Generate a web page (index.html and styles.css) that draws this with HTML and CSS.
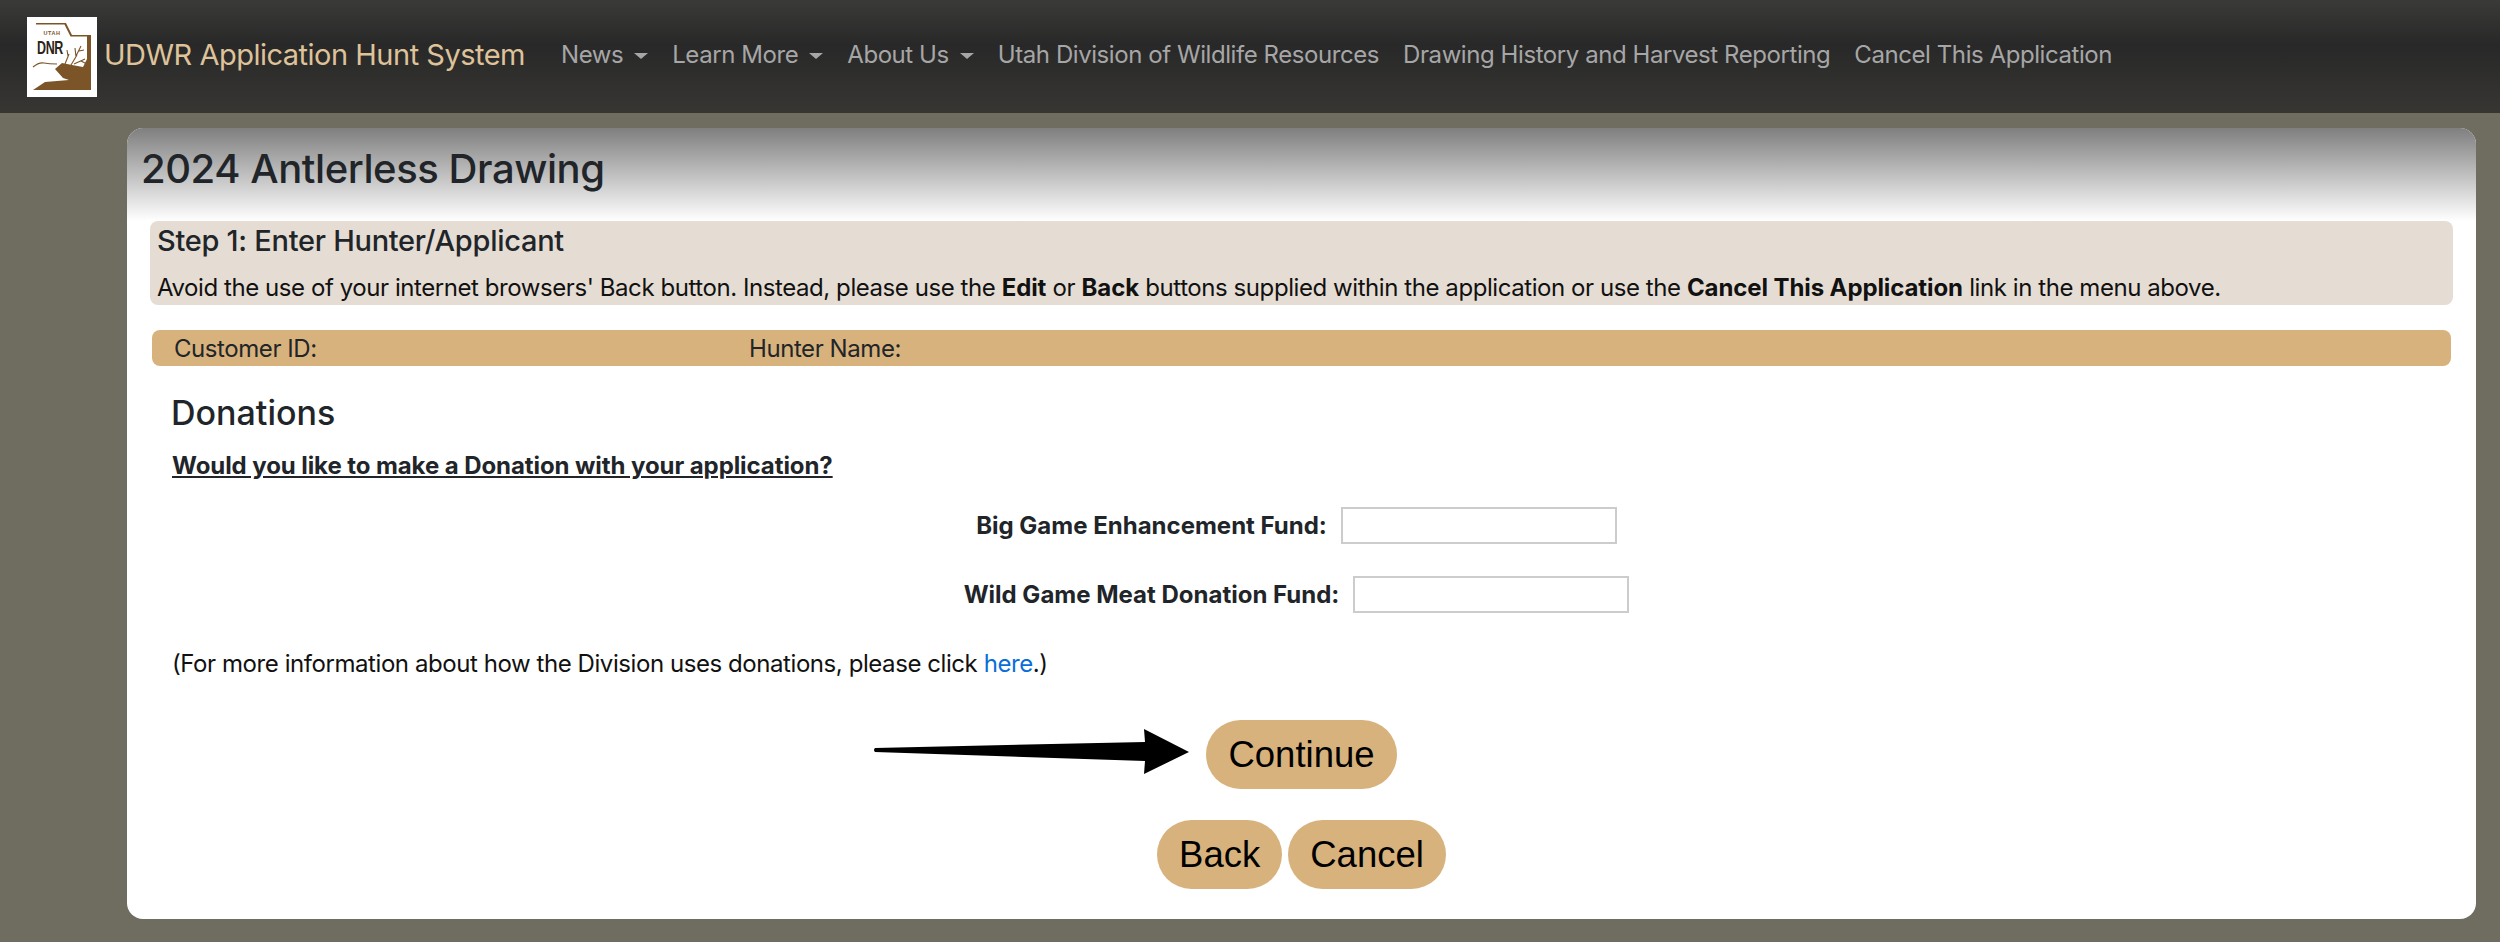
FILE: index.html
```html
<!DOCTYPE html>
<html lang="en">
<head>
    <meta charset="UTF-8">
    <meta name="viewport" content="width=device-width, initial-scale=1.0">
    <title>UDWR Application Hunt System</title>
    <link rel="stylesheet" href="styles.css">
</head>
<body>
    <nav class="navbar">
        <a class="brand" href="#">
            <svg class="logo" viewBox="0 0 70 80" width="70" height="80">
                <rect width="70" height="80" fill="#fff"/>
                <!-- state shape, white cut out of it -->
                <path d="M9 6 H39 L45 18 H64 V73 H6 Z" fill="#7b5527"/>
                <path d="M0 7.5 H37.5 L43.5 19.5 H60 V42 L56 50 L45 48 L35 46 L28 52 L36 61 L42 63 L18 65 L6 73 H0 Z" fill="#fff"/>
                <!-- antlers and ridge line -->
                <path d="M38 47 L42 37 M41 39 L40 33 M44 48 L50 38 M49 40 L48 31 M49 39 L54 29 M52 34 L57 33 M47 47 L58 42 M54 44 L60 47 M6 50 Q12 45 17 46 T30 47" fill="none" stroke="#7b5527" stroke-width="1.1"/>
                <text class="logo-utah" x="25" y="18" text-anchor="middle">UTAH</text>
                <text class="logo-dnr" x="10" y="37" textLength="26" lengthAdjust="spacingAndGlyphs">DNR</text>
            </svg>
            <span>UDWR Application Hunt System</span>
        </a>
        <ul class="nav-links">
            <li><a class="dropdown" href="#">News</a></li>
            <li><a class="dropdown" href="#">Learn More</a></li>
            <li><a class="dropdown" href="#">About Us</a></li>
            <li><a href="#">Utah Division of Wildlife Resources</a></li>
            <li><a href="#">Drawing History and Harvest Reporting</a></li>
            <li><a href="#">Cancel This Application</a></li>
        </ul>
    </nav>

    <main class="page">
        <div class="card">
            <div class="card-header">
                <h1>2024 Antlerless Drawing</h1>
            </div>

            <div class="step">
                <h2>Step 1: Enter Hunter/Applicant</h2>
                <p>Avoid the use of your internet browsers' Back button. Instead, please use the <strong>Edit</strong> or <strong>Back</strong> buttons supplied within the application or use the <strong>Cancel This Application</strong> link in the menu above.</p>
            </div>

            <div class="hunter-bar">
                <span class="customer-id">Customer ID:</span>
                <span>Hunter Name:</span>
            </div>

            <section class="donations">
                <h3>Donations</h3>
                <p class="question">Would you like to make a Donation with your application?</p>

                <div class="fund-row">
                    <label for="big-game">Big Game Enhancement Fund:</label>
                    <input id="big-game" type="text">
                </div>
                <div class="fund-row">
                    <label for="wild-game">Wild Game Meat Donation Fund:</label>
                    <input id="wild-game" type="text">
                </div>

                <p class="more-info">(For more information about how the Division uses donations, please click <a href="#">here</a>.)</p>
            </section>

            <div class="actions">
                <div class="continue-wrap">
                    <svg class="arrow" viewBox="0 0 320 50" width="320" height="50">
                        <path d="M2 21 L272 15 L271 2 L316 25 L271 47 L272 34 L2 25 Q0 23 2 21 Z" fill="#000"/>
                    </svg>
                    <button class="button">Continue</button>
                </div>
                <div class="button-row">
                    <button class="button">Back</button>
                    <button class="button">Cancel</button>
                </div>
            </div>
        </div>
    </main>
</body>
</html>
```

FILE: styles.css
```css
body {
    margin: 0;
    min-height: 942px;
    box-sizing: border-box;
    font-family: Inter, "Noto Sans", sans-serif;
    font-size: 24px;
    letter-spacing: -0.43px;
    color: #212529;
    background: linear-gradient(#75735f, #6f6d60 120px);
}
strong {
    letter-spacing: -0.1px;
}
.navbar {
    display: flex;
    align-items: center;
    height: 113px;
    padding-left: 27px;
    background: linear-gradient(#3a3a38, #282828 40%, #373633);
}
.brand {
    display: flex;
    align-items: center;
    gap: 7px;
    margin-right: 36px;
    font-size: 29px;
    letter-spacing: -0.5px;
    color: #dec29a;
    text-decoration: none;
}
.brand span {
    padding-bottom: 4px;
}
.logo {
    display: block;
}
.logo-utah {
    font-family: "Liberation Sans", sans-serif;
    font-size: 5.5px;
    font-weight: bold;
    letter-spacing: 0.5px;
    fill: #7b5527;
}
.logo-dnr {
    font-family: "Liberation Sans", sans-serif;
    font-size: 18px;
    font-weight: bold;
    fill: #2b2417;
}
.nav-links {
    display: flex;
    gap: 24px;
    list-style: none;
    margin: 0 0 4px;
    padding: 0;
}
.nav-links a {
    color: #a6a6a6;
    text-decoration: none;
}
.dropdown::after {
    content: "";
    display: inline-block;
    margin-left: 11px;
    vertical-align: 4px;
    border-top: 6px solid #a6a6a6;
    border-left: 7px solid transparent;
    border-right: 7px solid transparent;
}
.page {
    padding: 15px 24px 23px 127px;
}
.card {
    background: white;
    border-radius: 16px;
    padding-bottom: 30px;
}
.card-header {
    height: 93px;
    padding-left: 14px;
    border-radius: 16px 16px 0 0;
    background: linear-gradient(#7f7f7f, #ffffff);
}
h1 {
    margin: 0;
    padding-top: 17px;
    font-size: 40px;
    font-weight: 500;
    line-height: 48px;
}
.step {
    margin: 0 23px;
    padding: 1px 7px;
    height: 84px;
    box-sizing: border-box;
    background: #e5ddd4;
    border-radius: 8px;
}
.step h2 {
    margin: 0;
    font-size: 29px;
    font-weight: 500;
    letter-spacing: -0.28px;
    line-height: 38px;
}
.step p {
    margin: 10px 0 0;
    color: #111;
    line-height: 36px;
}
.hunter-bar {
    display: flex;
    align-items: center;
    height: 36px;
    margin: 25px 25px 0;
    padding-left: 22px;
    background: #d8b27c;
    border-radius: 8px;
}
.customer-id {
    width: 575px;
}
.donations {
    padding: 26px 44px 0;
}
h3 {
    margin: 0;
    font-size: 34px;
    font-weight: 500;
    letter-spacing: 0;
    line-height: 42px;
}
.question {
    margin: 17px 0 0 1px;
    font-weight: bold;
    letter-spacing: -0.08px;
    text-decoration: underline;
}
.fund-row {
    display: flex;
    justify-content: center;
    align-items: center;
    gap: 14px;
    padding-right: 10px;
    margin-top: 32px;
    font-weight: bold;
    letter-spacing: 0;
}
.question + .fund-row {
    margin-top: 27px;
}
.fund-row input {
    width: 276px;
    height: 37px;
    box-sizing: border-box;
    border: 2px solid #ccc;
    padding: 0;
}
.more-info {
    margin: 36px 0 0 1px;
    color: #111;
}
.more-info a {
    color: #0a6ed8;
    text-decoration: none;
}
.actions {
    display: flex;
    flex-direction: column;
    align-items: center;
    gap: 31px;
    margin-top: 42px;
}
.continue-wrap {
    position: relative;
}
.arrow {
    position: absolute;
    right: 100%;
    top: 7px;
    margin-right: 13px;
}
.button-row {
    display: flex;
    gap: 6px;
}
.button {
    height: 69px;
    padding: 0 22px;
    border: none;
    border-radius: 35px;
    background: #d8b27c;
    color: #000;
    font-family: "Liberation Sans", Arial, sans-serif;
    font-size: 36.5px;
    letter-spacing: 0;
}
```
